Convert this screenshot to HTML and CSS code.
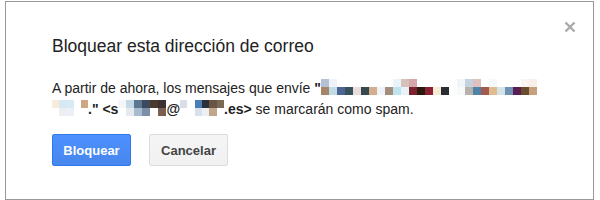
FILE: index.html
```html
<!DOCTYPE html>
<html>
<head>
  <link rel="stylesheet" href="styles.css">
</head>
<body>
  <div class="dialog">
    <span class="close">
      <svg width="12" height="12" viewBox="0 0 12 12"><path d="M1.5 1.5L10.5 10.5M10.5 1.5L1.5 10.5" stroke="#aaa" stroke-width="2.4"/></svg>
    </span>
    <div class="title">Bloquear esta dirección de correo</div>
    <div class="content">
      A partir de ahora, los mensajes que envíe <b>"<svg class="mosaic" width="216" height="16" viewBox="0 0 27 2" preserveAspectRatio="none" shape-rendering="crispEdges">
        <rect x="0" y="0" width="1" height="1" fill="#b7bfd3"/><rect x="1" y="0" width="1" height="1" fill="#eef3fa"/>
        <rect x="9" y="0" width="1" height="1" fill="#e8f4fa"/><rect x="10" y="0" width="1" height="1" fill="#d4c2ba"/><rect x="11" y="0" width="1" height="1" fill="#d5a6ac"/>
        <rect x="17" y="0" width="1" height="1" fill="#f1f4f8"/><rect x="18" y="0" width="1" height="1" fill="#c4d2de"/><rect x="19" y="0" width="1" height="1" fill="#e0c0c1"/>
        <rect x="21" y="0" width="1" height="1" fill="#f4f8fc"/><rect x="25" y="0" width="1" height="1" fill="#faf5f0"/><rect x="26" y="0" width="1" height="1" fill="#f8f0e8"/>
        <rect x="0" y="1" width="1" height="1" fill="#a58467"/><rect x="1" y="1" width="1" height="1" fill="#c1dbe8"/><rect x="2" y="1" width="1" height="1" fill="#4c6694"/>
        <rect x="3" y="1" width="1" height="1" fill="#38515c"/><rect x="4" y="1" width="1" height="1" fill="#e8dedd"/><rect x="5" y="1" width="1" height="1" fill="#37474f"/>
        <rect x="6" y="1" width="1" height="1" fill="#d3ad8d"/><rect x="7" y="1" width="1" height="1" fill="#eef3f8"/><rect x="8" y="1" width="1" height="1" fill="#a48d7c"/>
        <rect x="9" y="1" width="1" height="1" fill="#bfe4f0"/><rect x="10" y="1" width="1" height="1" fill="#e6f2f8"/><rect x="11" y="1" width="1" height="1" fill="#7f2230"/>
        <rect x="12" y="1" width="1" height="1" fill="#2a1a0d"/><rect x="13" y="1" width="1" height="1" fill="#8a2130"/><rect x="14" y="1" width="1" height="1" fill="#f6ecd6"/>
        <rect x="15" y="1" width="1" height="1" fill="#2a2d31"/><rect x="17" y="1" width="1" height="1" fill="#f7f9fa"/><rect x="18" y="1" width="1" height="1" fill="#b7b2ab"/>
        <rect x="19" y="1" width="1" height="1" fill="#4f84a9"/><rect x="20" y="1" width="1" height="1" fill="#a45950"/><rect x="21" y="1" width="1" height="1" fill="#e0bc90"/>
        <rect x="22" y="1" width="1" height="1" fill="#d5e2e8"/><rect x="23" y="1" width="1" height="1" fill="#7092b4"/><rect x="24" y="1" width="1" height="1" fill="#5a1c52"/>
        <rect x="25" y="1" width="1" height="1" fill="#6a4c30"/><rect x="26" y="1" width="1" height="1" fill="#c6a07c"/>
      </svg> <svg class="mosaic" width="36" height="16" viewBox="0 0 5 2" preserveAspectRatio="none" shape-rendering="crispEdges">
        <rect x="0" y="0" width="1" height="1" fill="#f6ecd8"/><rect x="1" y="0" width="1" height="1" fill="#d6e8f4"/><rect x="2" y="0" width="1" height="1" fill="#d8eaf4"/>
        <rect x="4" y="0" width="1" height="1" fill="#cda683"/>
        <rect x="1" y="1" width="1" height="1" fill="#eceef2"/><rect x="2" y="1" width="1" height="1" fill="#eceef8"/>
      </svg>." &lt;s<svg class="mosaic" width="48" height="16" viewBox="0 0 6 2" preserveAspectRatio="none" shape-rendering="crispEdges">
        <rect x="0" y="0" width="1" height="1" fill="#f4f6f8"/><rect x="1" y="0" width="1" height="1" fill="#c3d9e6"/><rect x="2" y="0" width="1" height="1" fill="#5b7890"/>
        <rect x="3" y="0" width="1" height="1" fill="#3b4a5e"/><rect x="4" y="0" width="1" height="1" fill="#4a3a2e"/><rect x="5" y="0" width="1" height="1" fill="#3c3030"/>
        <rect x="1" y="1" width="1" height="1" fill="#e4eaef"/><rect x="2" y="1" width="1" height="1" fill="#a8bccf"/><rect x="3" y="1" width="1" height="1" fill="#7d8fa8"/>
        <rect x="5" y="1" width="1" height="1" fill="#7a5e50"/>
      </svg>@<svg class="mosaic" width="44" height="16" viewBox="0 0 6 2" preserveAspectRatio="none" shape-rendering="crispEdges">
        <rect x="0" y="0" width="1" height="1" fill="#d8dee4"/><rect x="2" y="0" width="1" height="1" fill="#4a7fb6"/><rect x="3" y="0" width="1" height="1" fill="#2a2f3a"/>
        <rect x="4" y="0" width="1" height="1" fill="#6a5443"/><rect x="5" y="0" width="1" height="1" fill="#7b6a53"/>
        <rect x="2" y="1" width="1" height="1" fill="#d7e2ee"/><rect x="3" y="1" width="1" height="1" fill="#eceef2"/><rect x="4" y="1" width="1" height="1" fill="#c1a68c"/>
      </svg>.es&gt;</b> se marcarán como spam.
    </div>
    <div class="buttons">
      <button class="btn btn-primary">Bloquear</button>
      <button class="btn">Cancelar</button>
    </div>
  </div>
</body>
</html>
```

FILE: styles.css
```css
body {
  margin: 0;
  background: #fff;
  font-family: Arial, "Liberation Sans", sans-serif;
  color: #222;
}

.dialog {
  position: relative;
  box-sizing: border-box;
  width: 589px;
  height: 199px;
  margin: 1px 0 0 5px;
  border: 1px solid #999;
  padding: 34px 46px 0 46px;
}

.close {
  position: absolute;
  top: 19px;
  right: 17px;
  width: 12px;
  height: 12px;
}
.close svg {
  display: block;
}

.title {
  font-size: 17.5px;
  line-height: 20px;
}

.content {
  margin-top: 22px;
  font-size: 14px;
  line-height: 21px;
}

.mosaic {
  vertical-align: -2px;
}

.buttons {
  margin-top: 14px;
  display: flex;
  gap: 18px;
}

.btn {
  box-sizing: border-box;
  width: 79px;
  height: 32px;
  padding: 0;
  font-family: Arial, "Liberation Sans", sans-serif;
  font-size: 13px;
  font-weight: bold;
  color: #444;
  background: linear-gradient(#f5f5f5, #f1f1f1);
  border: 1px solid #dcdcdc;
  border-radius: 2px;
}

.btn-primary {
  color: #fff;
  background: linear-gradient(#4d90fe, #4787ed);
  border-color: #3079ed;
}
```
